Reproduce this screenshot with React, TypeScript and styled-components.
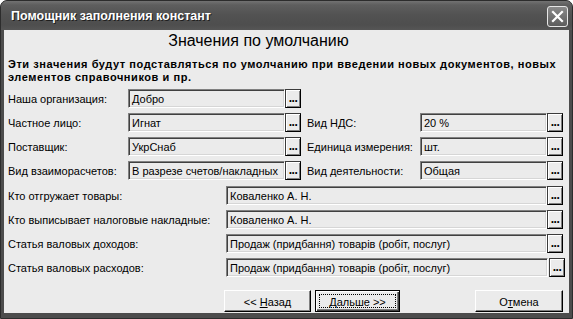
import React from "react";
import styled, { createGlobalStyle } from "styled-components";

const Global = createGlobalStyle`
  html, body { margin: 0; padding: 0; background: #ffffff; }
  body { font-family: "Liberation Sans", Arial, sans-serif; }
  * { box-sizing: border-box; }
`;

const Window = styled.div`
  width: 573px;
  height: 319px;
  background: #4c4c4c;
  border: 1px solid #2c2c2c;
  border-radius: 7px 7px 0 0;
  display: flex;
  flex-direction: column;
  overflow: hidden;
`;

const TitleBar = styled.div`
  height: 29px;
  flex: none;
  display: flex;
  align-items: center;
  padding: 0 4px 0 10px;
  background: linear-gradient(#727272 0px, #5e5e5e 4px, #525252 14px, #4e4e4e 24px, #565656 29px);
`;

const Title = styled.div`
  flex: 1;
  color: #ffffff;
  font: bold 12.5px "Liberation Sans", Arial, sans-serif;
  text-shadow: 1px 1px 0 #1e1e1e;
  padding-top: 1px;
`;

const CloseBtn = styled.div`
  width: 21px;
  height: 21px;
  margin-top: 2px;
  border: 1px solid #e6e6e6;
  border-radius: 3px;
  background: linear-gradient(#8a8a8a, #5c5c5c);
  display: flex;
  align-items: center;
  justify-content: center;
`;

const Client = styled.div`
  flex: 1;
  margin: 0 3px 5px 3px;
  background: #ebebeb;
  display: flex;
  flex-direction: column;
  color: #000;
  font: 11px "Liberation Sans", Arial, sans-serif;
`;

const Heading = styled.div`
  margin-top: 2px;
  height: 18px;
  line-height: 18px;
  font-size: 16px;
  text-align: center;
  padding-right: 56px;
`;

const Description = styled.div`
  margin-top: 8px;
  padding-left: 4px;
  font-weight: bold;
  line-height: 13px;
  letter-spacing: 0.56px;
  white-space: nowrap;
`;

const Rows = styled.div`
  margin-top: 5px;
  padding-left: 4px;
  display: flex;
  flex-direction: column;
  gap: 5px;
`;

const Row = styled.div<{ $extraTop?: number }>`
  display: flex;
  align-items: center;
  height: 19px;
  margin-top: ${(p) => p.$extraTop ?? 0}px;
`;

const Label = styled.div<{ $w: number; $ml?: number }>`
  width: ${(p) => p.$w}px;
  margin-left: ${(p) => p.$ml ?? 0}px;
  white-space: nowrap;
  padding-top: 1px;
`;

const Field = styled.div<{ $w: number }>`
  width: ${(p) => p.$w}px;
  height: 19px;
  border-top: 1px solid #808080;
  border-left: 1px solid #808080;
  border-right: 1px solid #ffffff;
  border-bottom: 1px solid #ffffff;
  box-shadow: inset 1px 1px 0 #404040, inset -1px -1px 0 #d6d6d6;
  background: #ebebeb;
  padding: 1px 3px 0 3px;
  display: flex;
  align-items: center;
  white-space: nowrap;
  overflow: hidden;
`;

const DotsBtn = styled.div<{ $shift?: number }>`
  width: 16px;
  height: 19px;
  margin-left: ${(p) => p.$shift ?? 0}px;
  border: 1px solid #000;
  border-top-color: #3a3a3a;
  border-left-color: #3a3a3a;
  box-shadow: inset 1px 1px 0 #ffffff, inset -1px -1px 0 #808080;
  background: #ebebeb;
  display: flex;
  align-items: flex-end;
  justify-content: center;
  font-weight: bold;
  font-size: 12px;
  line-height: 11px;
  padding-bottom: 3px;
  letter-spacing: -0.5px;
`;

const Footer = styled.div`
  margin-top: 13px;
  display: flex;
  padding-left: 220px;
  padding-right: 6px;
`;

const Button = styled.div<{ $w: number; $def?: boolean; $ml?: number }>`
  width: ${(p) => p.$w}px;
  height: 22px;
  margin-left: ${(p) => p.$ml ?? 0}px;
  position: relative;
  background: #ebebeb;
  border: 1px solid ${(p) => (p.$def ? "#000" : "transparent")};
  border-top-color: ${(p) => (p.$def ? "#000" : "#ffffff")};
  border-left-color: ${(p) => (p.$def ? "#000" : "#ffffff")};
  border-right-color: #000;
  border-bottom-color: #000;
  box-shadow: ${(p) =>
    p.$def
      ? "inset 1px 1px 0 #ffffff, inset -1px -1px 0 #404040, inset -2px -2px 0 #808080"
      : "inset -1px -1px 0 #808080"};
  display: flex;
  align-items: center;
  justify-content: center;
  padding-top: 1px;
  &:last-child {
    margin-left: auto;
  }
`;

const Caption = styled.span`
  white-space: pre;
`;

const FocusRing = styled.span`
  position: absolute;
  inset: 3px;
  border: 1px dotted #000;
  pointer-events: none;
`;

const U = styled.span`
  text-decoration: underline;
  text-underline-offset: 1px;
`;

function Dots({ shift }: { shift?: number }) {
  return <DotsBtn $shift={shift}>...</DotsBtn>;
}

export default function App() {
  return (
    <>
      <Global />
      <Window>
        <TitleBar>
          <Title>Помощник заполнения констант</Title>
          <CloseBtn>
            <svg width="13" height="13" viewBox="0 0 13 13">
              <path d="M2 2 L11 11 M11 2 L2 11" stroke="#ffffff" strokeWidth="2.2" strokeLinecap="square" />
            </svg>
          </CloseBtn>
        </TitleBar>
        <Client>
          <Heading>Значения по умолчанию</Heading>
          <Description>
            Эти значения будут подставляться по умолчанию при введении новых документов, новых
            <br />
            элементов справочников и пр.
          </Description>
          <Rows>
            <Row>
              <Label $w={120}>Наша организация:</Label>
              <Field $w={157}>Добро</Field>
              <Dots />
            </Row>
            <Row>
              <Label $w={120}>Частное лицо:</Label>
              <Field $w={157}>Игнат</Field>
              <Dots />
              <Label $w={113} $ml={6}>Вид НДС:</Label>
              <Field $w={127}>20 %</Field>
              <Dots />
            </Row>
            <Row>
              <Label $w={120}>Поставщик:</Label>
              <Field $w={157}>УкрСнаб</Field>
              <Dots />
              <Label $w={113} $ml={6}>Единица измерения:</Label>
              <Field $w={127}>шт.</Field>
              <Dots />
            </Row>
            <Row>
              <Label $w={120}>Вид взаиморасчетов:</Label>
              <Field $w={157}>В разрезе счетов/накладных</Field>
              <Dots />
              <Label $w={113} $ml={6}>Вид деятельности:</Label>
              <Field $w={127}>Общая</Field>
              <Dots />
            </Row>
            <Row $extraTop={1}>
              <Label $w={218}>Кто отгружает товары:</Label>
              <Field $w={321}>Коваленко А. Н.</Field>
              <Dots />
            </Row>
            <Row>
              <Label $w={218}>Кто выписывает налоговые накладные:</Label>
              <Field $w={321}>Коваленко А. Н.</Field>
              <Dots />
            </Row>
            <Row>
              <Label $w={218}>Статья валовых доходов:</Label>
              <Field $w={321}>Продаж (придбання) товарів (робіт, послуг)</Field>
              <Dots />
            </Row>
            <Row>
              <Label $w={218}>Статья валовых расходов:</Label>
              <Field $w={322}>Продаж (придбання) товарів (робіт, послуг)</Field>
              <Dots shift={1} />
            </Row>
          </Rows>
          <Footer>
            <Button $w={87}>
              <Caption>
                {"<< "}
                <U>Н</U>азад
              </Caption>
            </Button>
            <Button $w={85} $def $ml={4}>
              <FocusRing />
              <Caption>
                <U>Д</U>альше {">>"}
              </Caption>
            </Button>
            <Button $w={88}>
              <Caption>
                О<U>т</U>мена
              </Caption>
            </Button>
          </Footer>
        </Client>
      </Window>
    </>
  );
}
